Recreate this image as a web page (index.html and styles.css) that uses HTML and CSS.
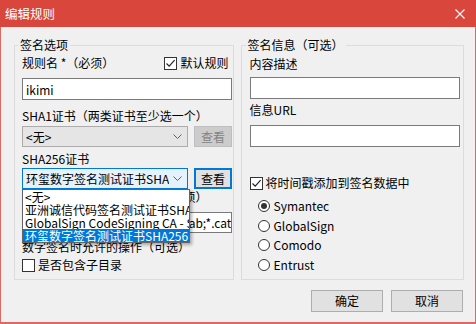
FILE: index.html
```html
<!DOCTYPE html>
<html lang="zh-CN">
<head>
    <meta charset="UTF-8">
    <title>编辑规则</title>
    <link rel="stylesheet" href="styles.css">
</head>
<body>
<div class="window">
    <div class="titlebar">
        <span class="title">编辑规则</span>
        <svg class="close" width="10" height="10" viewBox="0 0 10 10">
            <path d="M0.5 0.5L9.5 9.5M9.5 0.5L0.5 9.5" stroke="#fff" stroke-width="1.1" fill="none"/>
        </svg>
    </div>

    <div class="content">
        <div class="groups">
            <fieldset class="group group-left">
                <legend>签名选项</legend>

                <div class="name-row">
                    <span>规则名 *（必须）</span>
                    <label class="check">
                        <span class="box">
                            <svg width="11" height="11" viewBox="0 0 11 11"><path d="M1.5 5.5L4.2 8.2L9.6 2.2" stroke="#222" stroke-width="1.2" fill="none"/></svg>
                        </span>
                        默认规则
                    </label>
                </div>
                <input class="text name-input" type="text" value="ikimi">

                <div class="caption sha1-caption">SHA1证书（两类证书至少选一个）</div>
                <div class="cert-row sha1-row">
                    <div class="combo">
                        <span class="combo-text">&lt;无&gt;</span>
                        <svg class="chevron" width="9" height="5" viewBox="0 0 9 5"><path d="M0.5 0.5L4.5 4.5L8.5 0.5" stroke="#606060" fill="none"/></svg>
                    </div>
                    <button class="btn btn-view" disabled>查看</button>
                </div>

                <div class="caption sha256-caption">SHA256证书</div>
                <div class="cert-row sha256-row">
                    <div class="combo combo-open">
                        <span class="combo-text">环玺数字签名测试证书SHA256</span>
                        <svg class="chevron" width="9" height="5" viewBox="0 0 9 5"><path d="M0.5 0.5L4.5 4.5L8.5 0.5" stroke="#606060" fill="none"/></svg>
                    </div>
                    <button class="btn btn-view btn-default">查看</button>

                    <ul class="dropdown">
                        <li>&lt;无&gt;</li>
                        <li>亚洲诚信代码签名测试证书SHA256</li>
                        <li>GlobalSign CodeSigning CA - SHA256</li>
                        <li class="selected">环玺数字签名测试证书SHA256</li>
                    </ul>
                </div>

                <div class="caption">需要签名的文件类型后缀*（必须）</div>
                <input class="text ext-input" type="text" value="*.exe;*.dll;*.ocx;*.sys;*.msi;*.cab;*.cat">

                <div class="caption ops-caption">数字签名时允许的操作（可选）</div>
                <label class="check sub-check">
                    <span class="box"></span>
                    是否包含子目录
                </label>
            </fieldset>

            <fieldset class="group group-right">
                <legend>签名信息（可选）</legend>

                <div class="caption desc-caption">内容描述</div>
                <input class="text desc-input" type="text" value="">

                <div class="caption url-caption">信息URL</div>
                <input class="text url-input" type="text" value="">

                <label class="check stamp-check">
                    <span class="box">
                        <svg width="11" height="11" viewBox="0 0 11 11"><path d="M1.5 5.5L4.2 8.2L9.6 2.2" stroke="#222" stroke-width="1.2" fill="none"/></svg>
                    </span>
                    将时间戳添加到签名数据中
                </label>

                <div class="radios">
                    <label class="radio"><span class="dot checked"></span>Symantec</label>
                    <label class="radio"><span class="dot"></span>GlobalSign</label>
                    <label class="radio"><span class="dot"></span>Comodo</label>
                    <label class="radio"><span class="dot"></span>Entrust</label>
                </div>
            </fieldset>
        </div>

        <div class="actions">
            <button class="btn btn-action">确定</button>
            <button class="btn btn-action">取消</button>
        </div>
    </div>
</div>
</body>
</html>
```

FILE: styles.css
```css
* {
    box-sizing: border-box;
}

body {
    margin: 0;
    background: #ffffff;
    font-family: "Noto Sans CJK SC", sans-serif;
    font-size: 12px;
    color: #000;
}

.window {
    width: 476px;
    height: 324px;
    background: #f0f0f0;
    border: 1px solid #dd6a62;
    border-top: 0;
    border-bottom-width: 2px;
    display: flex;
    flex-direction: column;
}

.titlebar {
    height: 27px;
    margin: 0 -1px;
    padding: 0 11px 0 5px;
    background: #d9463c;
    color: #fff;
    display: flex;
    align-items: center;
    justify-content: space-between;
}

.title {
    font-size: 12.5px;
    line-height: 16px;
}

.content {
    flex: 1;
    padding: 10px 11px 0 13px;
}

.groups {
    display: flex;
    gap: 7px;
    height: 243px;
}

.group {
    margin: 0;
    min-width: 0;
    border: 1px solid #dcdcdc;
    padding: 1px 1px 0 7px;
}

.group-left {
    width: 220px;
}

.group-right {
    width: 224px;
    padding: 1px 4px 0 8px;
}

legend {
    padding: 0 2px;
    margin-left: -4px;
    line-height: 16px;
}

.caption {
    line-height: 16px;
    white-space: nowrap;
}

.name-row {
    display: flex;
    justify-content: space-between;
    height: 16px;
    line-height: 16px;
    margin-top: 1px;
    padding-right: 3px;
}

.check {
    display: flex;
    align-items: center;
    gap: 3px;
    height: 16px;
    line-height: 16px;
}

.box {
    width: 13px;
    height: 13px;
    border: 1px solid #333;
    background: #fff;
    display: flex;
    align-items: center;
    justify-content: center;
}

.text {
    display: block;
    width: 210px;
    height: 22px;
    margin: 0;
    padding: 0 0 0 3px;
    border: 1px solid #7a7a7a;
    background: #fff;
    font: inherit;
    color: #000;
    outline: none;
}

.name-input { margin-top: 7px; }
.sha1-caption { margin-top: 8px; }
.sha1-row { margin-top: 2px; }
.sha256-caption { margin-top: 4px; }
.sha256-row { margin-top: 1px; }
.ext-input { margin-top: 7px; height: 21px; }
.ops-caption { margin-top: 6px; }
.sub-check { margin-top: 2px; }

.desc-caption { margin-top: 2px; }
.desc-input { margin-top: 5px; }
.url-caption { margin-top: 3px; }
.url-input { margin-top: 7px; }
.stamp-check { margin-top: 28px; }

.cert-row {
    position: relative;
    display: flex;
    justify-content: space-between;
    width: 210px;
    height: 21px;
}

.combo {
    width: 166px;
    height: 21px;
    border: 1px solid #acacac;
    background: #e5e5e5;
    padding: 0 5px 0 3px;
    display: flex;
    align-items: center;
    gap: 4px;
}

.combo-open {
    border-color: #0078d7;
    background: #e5f1fb;
}

.combo-text {
    flex: 1;
    overflow: hidden;
    white-space: nowrap;
    line-height: 16px;
}

.chevron {
    flex: none;
}

.btn {
    font: inherit;
    color: #000;
    background: #e1e1e1;
    border: 1px solid #adadad;
    padding: 0;
    line-height: 16px;
}

.btn-view {
    width: 38px;
    height: 21px;
}

.btn[disabled] {
    background: #cccccc;
    border-color: #bfbfbf;
    color: #838383;
}

.btn-default {
    border-color: #0078d7;
    box-shadow: inset 0 0 0 1px #0078d7;
}

.dropdown {
    position: absolute;
    top: 21px;
    left: 0;
    width: 168px;
    margin: 0;
    padding: 0;
    list-style: none;
    background: #fff;
    border: 1px solid #646464;
    box-shadow: 2px 2px 3px rgba(0, 0, 0, 0.3);
}

.dropdown li {
    height: 13px;
    line-height: 13px;
    padding: 0 2px;
    overflow: hidden;
    white-space: nowrap;
}

.dropdown li.selected {
    background: #0078d7;
    color: #fff;
}

.radios {
    display: flex;
    flex-direction: column;
    gap: 3.5px;
    margin-top: 7px;
    padding-left: 8px;
}

.radio {
    display: flex;
    align-items: center;
    gap: 4px;
    height: 16px;
    line-height: 16px;
}

.dot {
    width: 12px;
    height: 12px;
    border: 1px solid #333;
    border-radius: 50%;
    background: #fff;
    display: flex;
    align-items: center;
    justify-content: center;
}

.dot.checked::after {
    content: "";
    width: 6px;
    height: 6px;
    border-radius: 50%;
    background: #333;
}

.actions {
    display: flex;
    justify-content: flex-end;
    gap: 8px;
    margin: 10px 1px 0 0;
}

.btn-action {
    width: 72px;
    height: 22px;
}
```
